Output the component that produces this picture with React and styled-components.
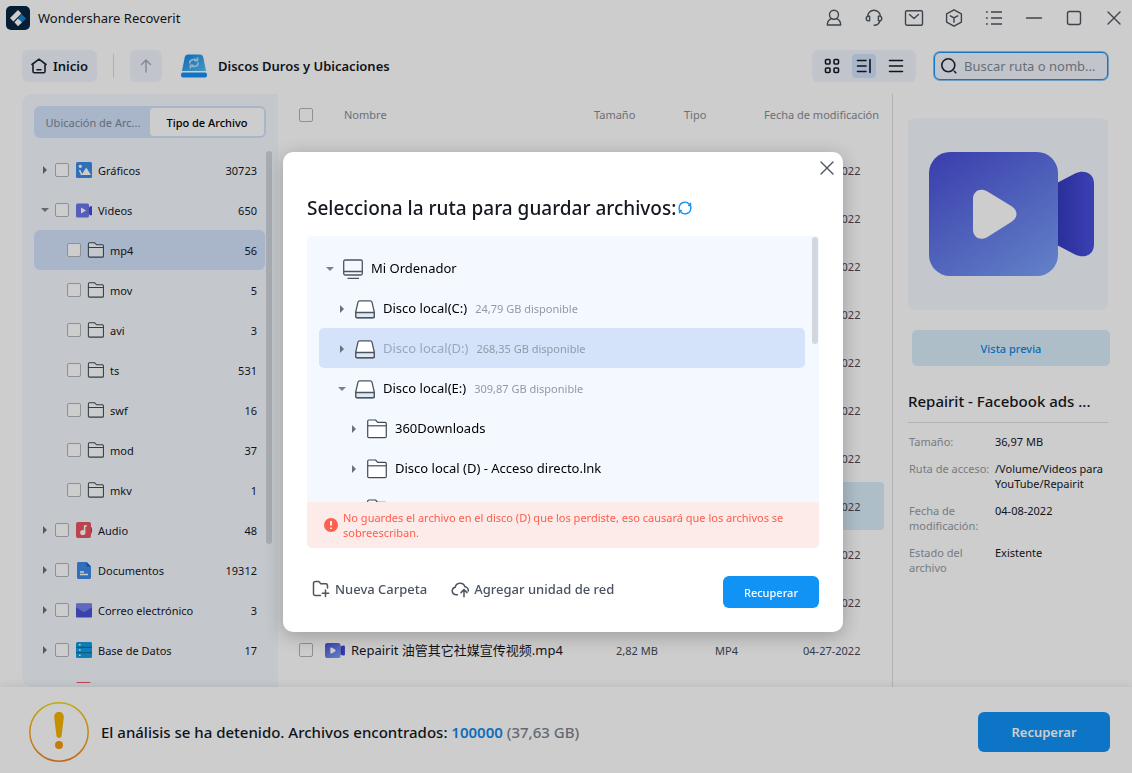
import React from "react";
import styled, { createGlobalStyle, css } from "styled-components";

const GlobalStyle = createGlobalStyle`
  *, *::before, *::after {
    box-sizing: border-box;
  }
  body {
    margin: 0;
    background: #fff;
    color: #14181f;
    font-family: "Noto Sans", "Noto Sans CJK SC", sans-serif;
    font-size: 11px;
    line-height: 15px;
  }
  button, input {
    font: inherit;
    color: inherit;
    margin: 0;
  }
  button {
    padding: 0;
    border: 0;
    background: none;
    cursor: pointer;
  }
  svg {
    display: block;
    flex: none;
  }
`;

/* ---------- data ---------- */

const categories = [
  { name: "Gráficos", count: 30723, icon: "image" },
  {
    name: "Videos",
    count: 650,
    icon: "video",
    children: [
      { name: "mp4", count: 56, selected: true },
      { name: "mov", count: 5 },
      { name: "avi", count: 3 },
      { name: "ts", count: 531 },
      { name: "swf", count: 16 },
      { name: "mod", count: 37 },
      { name: "mkv", count: 1 },
    ],
  },
  { name: "Audio", count: 48, icon: "audio" },
  { name: "Documentos", count: 19312, icon: "doc" },
  { name: "Correo electrónico", count: 3, icon: "mail" },
  { name: "Base de Datos", count: 17, icon: "db" },
  { icon: "audio" },
];

const files = [
  { date: "04-02-2022" },
  { date: "04-02-2022" },
  { date: "04-03-2022" },
  { date: "04-05-2022" },
  { date: "04-06-2022" },
  { date: "04-06-2022" },
  { date: "04-07-2022" },
  { date: "04-08-2022", selected: true },
  { date: "04-08-2022" },
  { date: "04-20-2022" },
  { name: "Repairit 油管其它社媒宣传视频.mp4", size: "2,82 MB", type: "MP4", date: "04-27-2022" },
];

const drives = [
  { name: "Mi Ordenador", level: 0, icon: "computer", open: true },
  { name: "Disco local(C:)", level: 1, icon: "drive", free: "24,79 GB disponible" },
  { name: "Disco local(D:)", level: 1, icon: "drive", free: "268,35 GB disponible", selected: true },
  { name: "Disco local(E:)", level: 1, icon: "drive", free: "309,87 GB disponible", open: true },
  { name: "360Downloads", level: 2, icon: "folder" },
  { name: "Disco local (D) - Acceso directo.lnk", level: 2, icon: "folder" },
  { level: 2, icon: "folder" },
];

const details = [
  ["Tamaño:", "36,97 MB"],
  ["Ruta de acceso:", "/Volume/Videos para YouTube/Repairit"],
  ["Fecha de modificación:", "04-08-2022"],
  ["Estado del archivo", "Existente"],
];

/* ---------- icons ---------- */

const Line = ({ size = 20, width = 1.4, color = "#4d5560", children }) => (
  <svg
    width={size}
    height={size}
    viewBox={`0 0 ${size} ${size}`}
    fill="none"
    stroke={color}
    strokeWidth={width}
    strokeLinecap="round"
    strokeLinejoin="round"
    aria-hidden="true"
  >
    {children}
  </svg>
);

const Logo = () => (
  <svg width="24" height="24" viewBox="0 0 24 24" aria-hidden="true">
    <rect width="24" height="24" rx="5" fill="#082640" />
    <path d="M4 12l8-8 3.4 3.4-8 8z" fill="#fff" />
    <path d="M15.4 8l4.6 4.6-4 4-4-4z" fill="#1583cc" />
    <path d="M12 12.6l4 4-4 3.6-3.6-4z" fill="#fff" />
  </svg>
);

const titleIcons = [
  {
    label: "Cuenta",
    art: (
      <>
        <circle cx="10" cy="6.8" r="4.5" />
        <path d="M7.2 10.6c-2.4 1.2-3.9 3-3.9 6.4h13.4c0-3.4-1.5-5.2-3.9-6.4" />
      </>
    ),
  },
  {
    label: "Soporte",
    art: (
      <>
        <path d="M3.7 8.5a6.3 6.3 0 0 1 12.6 0" />
        <path d="M5.6 8.3c-2.1-.5-3.4.5-3.4 2.2s1.3 2.7 3.4 2.2zM14.4 8.3c2.1-.5 3.4.5 3.4 2.2s-1.3 2.7-3.4 2.2z" />
        <path d="M15.8 13.2c-.7 2.3-2.3 4-5.6 4" />
      </>
    ),
  },
  {
    label: "Correo",
    art: (
      <>
        <rect x="1.5" y="2.7" width="17" height="14.6" rx="1.5" />
        <path d="M5.5 6.5l4.5 4 4.5-4" />
      </>
    ),
  },
  {
    label: "Productos",
    art: (
      <>
        <path d="M10 1.8l7.4 4.1v8.2L10 18.2l-7.4-4.1V5.9z" />
        <path d="M6.3 7.8L10 9.9l3.7-2.1M10 9.9v4.3" />
      </>
    ),
  },
  {
    label: "Menú",
    art: (
      <>
        <path d="M7 4h11M7 10h11M7 16h11" strokeLinecap="butt" />
        <path d="M2.5 4h.8M2.5 10h.8M2.5 16h.8" />
      </>
    ),
  },
  { label: "Minimizar", art: <path d="M2.5 10h15" /> },
  { label: "Maximizar", art: <rect x="3.5" y="3.5" width="13" height="13" rx="2" /> },
  { label: "Cerrar", art: <path d="M4 4l12 12M16 4L4 16" /> },
];

const HomeIcon = () => (
  <Line size={16} width={1.6} color="#1d2530">
    <path d="M1 6.5L8 1.2l7 5.3M2 7v6.500c0 .8.5 1.3 1.3 1.3h9.400c.8 0 1.3-.5 1.3-1.3V7M6 11.700h4" />
  </Line>
);

const UpIcon = () => (
  <Line size={16} color="#a3a9b1">
    <path d="M8 14V2M3.5 6.5L8 2l4.5 4.5" />
  </Line>
);

const DiskIcon = () => (
  <svg width="26" height="24" viewBox="0 0 26 24" aria-hidden="true">
    <defs>
      <linearGradient id="disk" x1="0" y1="0" x2="1" y2="1">
        <stop offset="0" stopColor="#0d86ec" />
        <stop offset="1" stopColor="#5cbdea" />
      </linearGradient>
    </defs>
    <path d="M7 .5h12c1.6 0 2.8 1 3.2 2.6L25 17H1L3.8 3.1C4.2 1.5 5.4.5 7 .5z" fill="url(#disk)" />
    <rect x="0" y="18.5" width="26" height="5" rx="2" fill="#1590f5" />
    <g fill="none" stroke="#b9dcf8" strokeWidth="1.6" strokeLinecap="round" strokeLinejoin="round">
      <path d="M8.800 9a4.300 3.600 0 0 1 7.200-2.700M17.200 9a4.300 3.600 0 0 1-7.200 2.700" />
      <path d="M16.600 4v2.600h-2.800M9.400 14v-2.600h2.800" />
    </g>
  </svg>
);

const FolderIcon = ({ size = 20, viewBox = "0 0 20 20", width = 1.2 }) => (
  <svg
    width={size}
    height={size}
    viewBox={viewBox}
    fill="#fff"
    fillOpacity=".8"
    stroke="#434b56"
    strokeWidth={width}
    strokeLinejoin="round"
    aria-hidden="true"
  >
    <path d="M.7 17.5V2.2c0-.7.5-1.200 1.200-1.200h6.600l2.200 2.400h7.400c.7 0 1.200.5 1.200 1.200v12.900c0 .7-.5 1.200-1.200 1.200H1.900c-.7 0-1.200-.5-1.200-1.200z" />
    <path d="M.7 6.8h18.6" />
  </svg>
);

const DriveIcon = () => (
  <svg width="20" height="20" viewBox="0 0 20 20" fill="#fff" stroke="#4b5560" strokeWidth="1.3" aria-hidden="true">
    <path d="M4.600 1.800h10.800c.8 0 1.400.5 1.600 1.300l2.400 10.500v3.700c0 .9-.7 1.500-1.500 1.500H2.100c-.8 0-1.500-.6-1.500-1.500v-3.700L3 3.100c.2-.8.8-1.300 1.600-1.300z" />
    <path d="M.8 13.500h18.400v3.800c0 .8-.6 1.400-1.300 1.400H2.100c-.7 0-1.300-.6-1.300-1.400z" fill="#dfe8f3" />
  </svg>
);

const ComputerIcon = () => (
  <svg width="20" height="20" viewBox="0 0 20 20" fill="none" stroke="#4b5560" strokeWidth="1.3" aria-hidden="true">
    <rect x=".7" y="1" width="18.6" height="15" rx="1.5" />
    <path d="M.7 12.5h18.600M4.500 19.300h11.500" />
  </svg>
);

const VideoIcon = ({ width, height }) => (
  <svg width={width} height={height} viewBox="0 0 165 124" aria-hidden="true">
    <defs>
      <linearGradient id="camBody" x1=".1" y1="0" x2=".8" y2="1">
        <stop offset="0" stopColor="#4a50d8" />
        <stop offset="1" stopColor="#789cf6" />
      </linearGradient>
      <linearGradient id="camLens" x1="0" y1="0" x2="1" y2="0">
        <stop offset="0" stopColor="#3439bd" />
        <stop offset="1" stopColor="#4a50e0" />
      </linearGradient>
    </defs>
    <path d="M126 32l20-10.500c9-4.500 19-.5 19 10v61c0 10.500-10 14.500-19 10L126 92z" fill="url(#camLens)" />
    <rect width="129" height="124" rx="21" fill="url(#camBody)" />
    <path d="M44 47c0-8.500 8-11.500 14.500-7.500L83 54.500c6 4 6 11 0 15L58.500 85C52 89 44 86 44 77.500z" fill="#fff" />
  </svg>
);

const categoryIcons = {
  image: (
    <svg width="17" height="17" viewBox="0 0 17 17" aria-hidden="true">
      <rect x="1" y="0" width="16" height="16" rx="1.5" fill="#3a8de6" />
      <circle cx="5.3" cy="4.3" r="1.6" fill="#fff" />
      <path d="M6.5 13l4.700-7.500L16 13z" fill="#fff" />
      <path d="M4.5 8l2.300 4.800" stroke="#fff" strokeWidth="1.6" />
    </svg>
  ),
  video: (
    <svg width="17" height="17" viewBox="0 0 17 17" aria-hidden="true">
      <rect x="1" y="1.5" width="13" height="14" rx="1.5" fill="#6a76e6" />
      <path d="M14 5.500l1-1.300h2v9h-2l-1-1.200z" fill="#454ade" />
      <path d="M6 5.500l5 3-5 3z" fill="#fff" />
    </svg>
  ),
  audio: (
    <svg width="17" height="17" viewBox="0 0 17 17" aria-hidden="true">
      <path d="M15.500 4c2 1.500 2 7 0 8.500z" fill="#c4273f" />
      <rect x="1" y="0" width="15" height="16" rx="2" fill="#e65563" />
      <circle cx="7.8" cy="10.5" r="2.6" fill="#fff" />
      <path d="M9.600 10.500V4h2.200" stroke="#fff" strokeWidth="1.5" fill="none" />
    </svg>
  ),
  doc: (
    <svg width="17" height="17" viewBox="0 0 17 17" aria-hidden="true">
      <path d="M3.500 0h8L16 4.500v11c0 .8-.6 1.500-1.500 1.500h-11C2.600 17 2 16.300 2 15.500v-14C2 .7 2.600 0 3.500 0z" fill="#3d8be8" />
      <path d="M11.500 0L16 4.500h-4.500z" fill="#1b5fbe" />
      <path d="M5 10h4M5 12.500h8" stroke="#fff" strokeWidth="1.3" />
    </svg>
  ),
  mail: (
    <svg width="17" height="17" viewBox="0 0 17 17" aria-hidden="true">
      <rect x="1" y="1.5" width="16" height="14" rx="1" fill="#4b53d6" />
      <path d="M1 2.500c0-.6.4-1 1-1h14c.6 0 1 .4 1 1v2.800l-8 5-8-5z" fill="#7a83ea" />
    </svg>
  ),
  db: (
    <svg width="17" height="17" viewBox="0 0 17 17" aria-hidden="true">
      <rect x="1" y="0" width="16" height="16" rx="1.5" fill="#149ce0" />
      <path d="M1 5.300h16M1 10.600h16" stroke="#0a72b4" strokeWidth="1.2" />
      <path d="M4 2.700h1.600M4 8h1.600M4 13.300h1.600" stroke="#fff" strokeWidth="1.6" />
    </svg>
  ),
};

const driveIcons = {
  computer: <ComputerIcon />,
  drive: <DriveIcon />,
  folder: <FolderIcon />,
};

/* ---------- window ---------- */

const Window = styled.div`
  display: flex;
  flex-direction: column;
  height: 100vh;
  overflow: hidden;
`;

const TitleBar = styled.header`
  display: flex;
  align-items: center;
  height: 36px;
  padding: 0 6px;
  font-size: 13px;
`;

const AppName = styled.span`
  flex: 1;
  margin-left: 8px;
`;

const IconButton = styled.button`
  display: grid;
  place-items: center;
  width: 24px;
  height: 24px;
`;

const WindowControls = styled.div`
  display: flex;
  gap: 16px;
`;

const Toolbar = styled.nav`
  display: flex;
  align-items: center;
  padding: 14px 24px 12px 22px;
`;

const softButton = css`
  display: flex;
  align-items: center;
  justify-content: center;
  height: 32px;
  border-radius: 6px;
  background: #f0f5fd;
`;

const HomeButton = styled.button`
  ${softButton}
  gap: 6px;
  padding: 0 9px;
  font-size: 13px;
  font-weight: 600;
`;

const Divider = styled.span`
  width: 1px;
  height: 24px;
  margin: 0 16px;
  background: #d9dce0;
`;

const UpButton = styled.button`
  ${softButton}
  width: 32px;
`;

const Location = styled.div`
  display: flex;
  flex: 1;
  align-items: center;
  gap: 11px;
  margin-left: 19px;
  font-size: 13px;
  font-weight: 600;
`;

const ViewSwitch = styled.div`
  ${softButton}
  gap: 8px;
  width: 104px;
  margin-right: 18px;
`;

const ViewButton = styled(IconButton)`
  border-radius: 4px;
  background: ${({ $active }) => ($active ? "#d3e1fb" : "none")};
`;

const SearchBox = styled.label`
  ${softButton}
  justify-content: flex-start;
  gap: 6px;
  width: 174px;
  height: 28px;
  padding: 0 5px;
  border: 1px solid #1a92f2;
  box-shadow: 0 0 0 1px #8cc3f2;

  input {
    flex: 1;
    min-width: 0;
    padding: 0;
    border: 0;
    outline: 0;
    background: none;
    font-size: 13px;
  }
  input::placeholder {
    color: #838992;
    opacity: 1;
  }
`;

const Body = styled.div`
  display: flex;
  flex: 1;
  min-height: 0;
`;

/* ---------- sidebar ---------- */

const Sidebar = styled.aside`
  display: flex;
  flex-direction: column;
  flex: none;
  gap: 12px;
  width: 256px;
  margin-left: 22px;
  padding: 12px 6px 4px 12px;
  border-radius: 10px 0 0 10px;
  background: #f4f9ff;
`;

const Tabs = styled.div`
  display: grid;
  grid-template-columns: 1fr 1fr;
  flex: none;
  height: 32px;
  margin-right: 6px;
  padding: 2px;
  border-radius: 6px;
  background: #d3e1fb;
`;

const Tab = styled.button`
  border-radius: 4px;
  color: ${({ $active }) => ($active ? "#000" : "#7b8696")};
  background: ${({ $active }) => ($active ? "#fff" : "none")};
  font-weight: ${({ $active }) => ($active ? 500 : 400)};
  white-space: nowrap;
`;

const TreeScroll = styled.div`
  display: flex;
  flex: 1;
  gap: 1px;
  min-height: 0;
  overflow: hidden;
`;

const Tree = styled.ul`
  flex: 1;
  margin: 0;
  padding: 0;
  list-style: none;
`;

const TreeRow = styled.li`
  display: flex;
  align-items: center;
  gap: 6px;
  height: 40px;
  padding: 0 8px 0 ${({ $child }) => ($child ? 33 : 7)}px;
  border-radius: 6px;
  background: ${({ $selected }) => ($selected ? "#d3e1fb" : "none")};

  label {
    flex: 1;
  }
`;

const ScrollThumb = styled.div`
  flex: none;
  width: 6px;
  height: ${({ $height }) => $height};
  margin-top: 1px;
  border-radius: 3px;
  background: #d2d6dd;
`;

const Checkbox = styled.input.attrs({ type: "checkbox" })`
  appearance: none;
  display: block;
  flex: none;
  width: 14px;
  height: 14px;
  border: 1px solid #b0b3b8;
  border-radius: 2px;
  background: #fff;
`;

const Arrow = styled.button`
  flex: none;
  width: ${({ $width }) => $width}px;
  height: 16px;

  &::before {
    content: "";
    display: block;
    width: 0;
    margin: 0 auto;
    border: 4px solid transparent;
    ${({ $open }) =>
      $open
        ? "border-top-color: #7c838d; border-bottom: 0;"
        : "border-left-color: #6b727c; border-right: 0;"}
  }
`;

/* ---------- file list ---------- */

const Main = styled.main`
  flex: 1;
  min-width: 0;
  padding: 0 8px 0 12px;
  overflow: hidden;
`;

const FileTable = styled.table`
  width: 100%;
  border-collapse: collapse;
  table-layout: fixed;
  color: #454c57;

  th, td {
    padding: 0;
    text-align: left;
    font-weight: 400;
    white-space: nowrap;
  }
  th {
    height: 52px;
    padding-bottom: 11px;
    color: #868c95;
  }
  td {
    height: 48px;
  }
  th:first-child, td:first-child {
    width: 35px;
    padding-left: 9px;
  }
`;

const HeadCell = styled.th`
  width: ${({ $width }) => $width};

  && {
    padding-left: ${({ $inset = 0 }) => $inset}px;
  }
`;

const FileRow = styled.tr`
  background: ${({ $selected }) => ($selected ? "#d8edfb" : "none")};

  td:first-child {
    border-radius: 4px 0 0 4px;
  }
  td:last-child {
    border-radius: 0 4px 4px 0;
  }
`;

const FileName = styled.span`
  display: flex;
  align-items: center;
  gap: 6px;
  color: #14181f;
  font-size: 13px;
`;

const Cell = styled.td`
  && {
    padding-left: ${({ $inset }) => $inset}px;
  }
`;

/* ---------- details ---------- */

const Details = styled.aside`
  flex: none;
  width: 240px;
  padding: 24px 24px 0 15px;
  border-left: 1px solid #dcdfe3;
`;

const Thumb = styled.div`
  display: grid;
  place-items: center;
  height: 192px;
  padding-left: 6px;
  border-radius: 6px;
  background: #f4f9ff;
`;

const PreviewButton = styled.button`
  display: block;
  width: 198px;
  height: 36px;
  margin: 20px 0 0 4px;
  border-radius: 5px;
  background: #d8edfb;
  color: #0f86e4;
  font-weight: 500;
`;

const FileTitle = styled.h2`
  margin: 23px 0 0;
  padding-bottom: 9px;
  border-bottom: 1px solid #dcdfe3;
  font-size: 15px;
  font-weight: 500;
  line-height: 24px;
  white-space: nowrap;
`;

const DetailList = styled.dl`
  display: grid;
  grid-template-columns: 86px 1fr;
  row-gap: 12px;
  margin: 11px 0 0;
  padding-left: 1px;

  dt {
    color: #949aa3;
  }
  dd {
    margin: 0;
    color: #14181f;
  }
`;

/* ---------- footer ---------- */

const Footer = styled.footer`
  display: flex;
  align-items: center;
  gap: 12px;
  flex: none;
  height: 86px;
  padding: 4px 22px 0 29px;
  background: #fff;
  box-shadow: 0 -2px 8px rgba(0, 0, 0, 0.08);
`;

const Status = styled.p`
  flex: 1;
  margin: 0;
  font-size: 15px;
  font-weight: 500;
  line-height: 20px;

  a {
    color: #1389ea;
    font-weight: 600;
    text-decoration: none;
  }
  span {
    color: #7d838c;
  }
`;

const PrimaryButton = styled.button`
  width: ${({ $large }) => ($large ? 132 : 96)}px;
  height: ${({ $large }) => ($large ? 40 : 32)}px;
  border-radius: 6px;
  background: #1192f5;
  color: #fff;
  font-size: ${({ $large }) => ($large ? 13 : 11)}px;
  font-weight: ${({ $large }) => ($large ? 600 : 500)};
`;

/* ---------- dialog ---------- */

const Backdrop = styled.div`
  position: fixed;
  inset: 0;
  display: grid;
  place-items: center;
  padding: 11px 6px 0 0;
  background: rgba(0, 0, 0, 0.196);
`;

const Dialog = styled.section`
  width: 560px;
  padding: 4px 24px 24px;
  border-radius: 10px;
  background: #fff;
  box-shadow: 0 4px 20px rgba(0, 0, 0, 0.25);
`;

const DialogClose = styled(IconButton)`
  margin: 0 -20px 0 auto;
`;

const DialogTitle = styled.h1`
  display: flex;
  align-items: center;
  gap: 2px;
  margin: 14px 0;
  font-size: 19px;
  font-weight: 500;
  line-height: 28px;
`;

const DriveBox = styled.div`
  display: flex;
  gap: 7px;
  height: 266px;
  padding-left: 12px;
  padding-right: 1px;
  border-radius: 4px 4px 0 0;
  background: #f4f8ff;
  overflow: hidden;
`;

const DriveList = styled.ul`
  flex: 1;
  margin: 0;
  padding: 12px 0 0;
  list-style: none;
`;

const DriveRow = styled.li`
  display: flex;
  align-items: center;
  gap: 8px;
  height: 40px;
  padding-top: 1px;
  padding-left: ${({ $level }) => 5 + $level * 12}px;
  border-radius: 5px;
  background: ${({ $selected }) => ($selected ? "#d4e2fa" : "none")};
  color: ${({ $selected }) => ($selected ? "#9ba8bc" : "#000")};
  font-size: 13px;

  small {
    color: #929aa6;
    font-size: 11px;
  }
`;

const Warning = styled.p`
  display: flex;
  align-items: center;
  gap: 5px;
  height: 46px;
  margin: 0;
  padding: 0 20px 0 17px;
  border-radius: 0 0 5px 5px;
  background: #fcebe8;
  color: #ff5c4d;
`;

const Actions = styled.div`
  display: flex;
  align-items: center;
  gap: 24px;
  margin-top: 28px;
  padding-left: 5px;
`;

const TextButton = styled.button`
  display: flex;
  align-items: center;
  gap: 5px;
  height: 24px;
  margin-bottom: 6px;
  color: #4b5360;
  font-size: 13px;
  font-weight: 500;
`;

const Spacer = styled.span`
  flex: 1;
`;

function CategoryRow({ item, child }) {
  const id = `cat-${item.name}`;
  return (
    <TreeRow $child={child} $selected={item.selected}>
      {!child && <Arrow $width={8} $open={Boolean(item.children)} aria-label="Expandir" />}
      <Checkbox id={id} />
      {child ? <FolderIcon size={17} viewBox="-1 0 21 21" width={1.3} /> : categoryIcons[item.icon]}
      <label htmlFor={id}>{item.name}</label>
      <span>{item.count}</span>
    </TreeRow>
  );
}

function SaveDialog() {
  return (
    <Backdrop>
      <Dialog role="dialog" aria-labelledby="dialog-title">
        <DialogClose aria-label="Cerrar">
          <Line>
            <path d="M4 4l12 12M16 4L4 16" />
          </Line>
        </DialogClose>
        <DialogTitle id="dialog-title">
          Selecciona la ruta para guardar archivos:
          <Line size={14} width={1.4} color="#1192f5">
            <path d="M1.200 8.500V6.800A5.700 5.700 0 0 1 11.300 3.300M12.800 5.500V7.200A5.700 5.700 0 0 1 2.700 10.700" />
            <path d="M12.500 2.200v2.300h-1.800M1.500 11.800V9.500h1.800" />
          </Line>
        </DialogTitle>
        <DriveBox>
          <DriveList>
            {drives.map((d, i) => (
              <DriveRow key={i} $level={d.level} $selected={d.selected}>
                <Arrow $width={11} $open={d.open} aria-label="Expandir" />
                {driveIcons[d.icon]}
                <span>{d.name}</span>
                {d.free && <small>{d.free}</small>}
              </DriveRow>
            ))}
          </DriveList>
          <ScrollThumb $height="107px" />
        </DriveBox>
        <Warning>
          <svg width="14" height="14" viewBox="0 0 14 14" aria-hidden="true">
            <circle cx="7" cy="7" r="7" fill="#ff604d" />
            <path d="M7 3v4.500M7 9.500v1.500" stroke="#fff" strokeWidth="1.8" />
          </svg>
          <span>
            No guardes el archivo en el disco (D) que los perdiste, eso causará que los archivos se
            sobreescriban.
          </span>
        </Warning>
        <Actions>
          <TextButton>
            <Line size={18} width={1.5}>
              <path d="M8.500 15.500H3.200c-1 0-1.700-.7-1.700-1.700V3.200c0-1 .7-1.700 1.700-1.700h3.600l2 2.200h5c1 0 1.700.7 1.700 1.700v2.600M13.500 10v6.500M10.300 13.200h6.400" />
            </Line>
            Nueva Carpeta
          </TextButton>
          <TextButton>
            <Line size={18} width={1.5}>
              <path d="M6.500 14.800H4.800a3.800 3.800 0 0 1-.6-7.500 5 5 0 0 1 9.700-.6 3.600 3.600 0 0 1 3.300 4.300M13 16.800V10M10 12.600l3-3 3 3" />
            </Line>
            Agregar unidad de red
          </TextButton>
          <Spacer />
          <PrimaryButton>Recuperar</PrimaryButton>
        </Actions>
      </Dialog>
    </Backdrop>
  );
}

export default function App() {
  return (
    <>
      <GlobalStyle />
      <Window>
        <TitleBar>
          <Logo />
          <AppName>Wondershare Recoverit</AppName>
          <WindowControls>
            {titleIcons.map(({ label, art }) => (
              <IconButton key={label} aria-label={label}>
                <Line>{art}</Line>
              </IconButton>
            ))}
          </WindowControls>
        </TitleBar>

        <Toolbar>
          <HomeButton>
            <HomeIcon />
            Inicio
          </HomeButton>
          <Divider />
          <UpButton aria-label="Subir">
            <UpIcon />
          </UpButton>
          <Location>
            <DiskIcon />
            Discos Duros y Ubicaciones
          </Location>
          <ViewSwitch>
            <ViewButton aria-label="Cuadrícula">
              <Line size={16} width={1.6} color="#14181f">
                <rect x="1.5" y="1.5" width="4.5" height="4.5" rx="1" />
                <rect x="10" y="1.5" width="4.5" height="4.5" rx="1" />
                <rect x="1.5" y="10" width="4.5" height="4.5" rx="1" />
                <rect x="10" y="10" width="4.5" height="4.5" rx="1" />
              </Line>
            </ViewButton>
            <ViewButton $active aria-label="Detalles">
              <Line size={16} width={1.6} color="#14181f">
                <path d="M1.500 2.500h8.500M1.500 8h8.500M1.500 13.500h8.500M14 1.500v13" />
              </Line>
            </ViewButton>
            <ViewButton aria-label="Lista">
              <Line size={16} width={1.6} color="#14181f">
                <path d="M1.500 2.500h13M1.500 8h13M1.500 13.500h13" />
              </Line>
            </ViewButton>
          </ViewSwitch>
          <SearchBox>
            <Line size={18} width={1.6} color="#1d2530">
              <circle cx="8.3" cy="8.3" r="6.5" />
              <path d="M14.300 14.300l1.500 1.500" />
            </Line>
            <input type="text" aria-label="Buscar" placeholder="Buscar ruta o nomb..." />
          </SearchBox>
        </Toolbar>

        <Body>
          <Sidebar>
            <Tabs>
              <Tab>Ubicación de Arc...</Tab>
              <Tab $active>Tipo de Archivo</Tab>
            </Tabs>
            <TreeScroll>
              <Tree>
                {categories.map((cat, i) => (
                  <React.Fragment key={i}>
                    <CategoryRow item={cat} />
                    {cat.children?.map((c) => (
                      <CategoryRow key={c.name} item={c} child />
                    ))}
                  </React.Fragment>
                ))}
              </Tree>
              <ScrollThumb $height="393px" />
            </TreeScroll>
          </Sidebar>

          <Main>
            <FileTable>
              <thead>
                <tr>
                  <th>
                    <Checkbox aria-label="Seleccionar todo" />
                  </th>
                  <HeadCell $inset={19}>Nombre</HeadCell>
                  <HeadCell $width="90px">Tamaño</HeadCell>
                  <HeadCell $width="80px">Tipo</HeadCell>
                  <HeadCell $width="120px">Fecha de modificación</HeadCell>
                </tr>
              </thead>
              <tbody>
                {files.map((f, i) => (
                  <FileRow key={i} $selected={f.selected}>
                    <td>
                      <Checkbox aria-label="Seleccionar archivo" />
                    </td>
                    <td>
                      <FileName>
                        <VideoIcon width={20} height={15} />
                        {f.name}
                      </FileName>
                    </td>
                    <Cell $inset={22}>{f.size}</Cell>
                    <Cell $inset={31}>{f.type}</Cell>
                    <Cell $inset={39}>{f.date}</Cell>
                  </FileRow>
                ))}
              </tbody>
            </FileTable>
          </Main>

          <Details>
            <Thumb>
              <VideoIcon width={165} height={124} />
            </Thumb>
            <PreviewButton>Vista previa</PreviewButton>
            <FileTitle>Repairit - Facebook ads ...</FileTitle>
            <DetailList>
              {details.map(([label, value]) => (
                <React.Fragment key={label}>
                  <dt>{label}</dt>
                  <dd>{value}</dd>
                </React.Fragment>
              ))}
            </DetailList>
          </Details>
        </Body>

        <Footer>
          <svg width="60" height="60" viewBox="0 0 60 60" aria-hidden="true">
            <defs>
              <linearGradient id="warn" x1="0" y1="0" x2="0" y2="1">
                <stop offset="0" stopColor="#f2d21a" />
                <stop offset="1" stopColor="#f0821e" />
              </linearGradient>
            </defs>
            <circle cx="30" cy="30" r="29.2" fill="none" stroke="url(#warn)" strokeWidth="1.5" />
            <path d="M30 10c3 0 5 2 4.800 5.500L32.500 34c-.3 2.500-4.700 2.500-5 0l-2.300-18.500C25 12 27 10 30 10z" fill="#f5b400" />
            <circle cx="30" cy="43" r="4" fill="#f59a0a" />
          </svg>
          <Status>
            El análisis se ha detenido. Archivos encontrados: <a href="#encontrados">100000</a>{" "}
            <span>(37,63 GB)</span>
          </Status>
          <PrimaryButton $large>Recuperar</PrimaryButton>
        </Footer>
      </Window>
      <SaveDialog />
    </>
  );
}
